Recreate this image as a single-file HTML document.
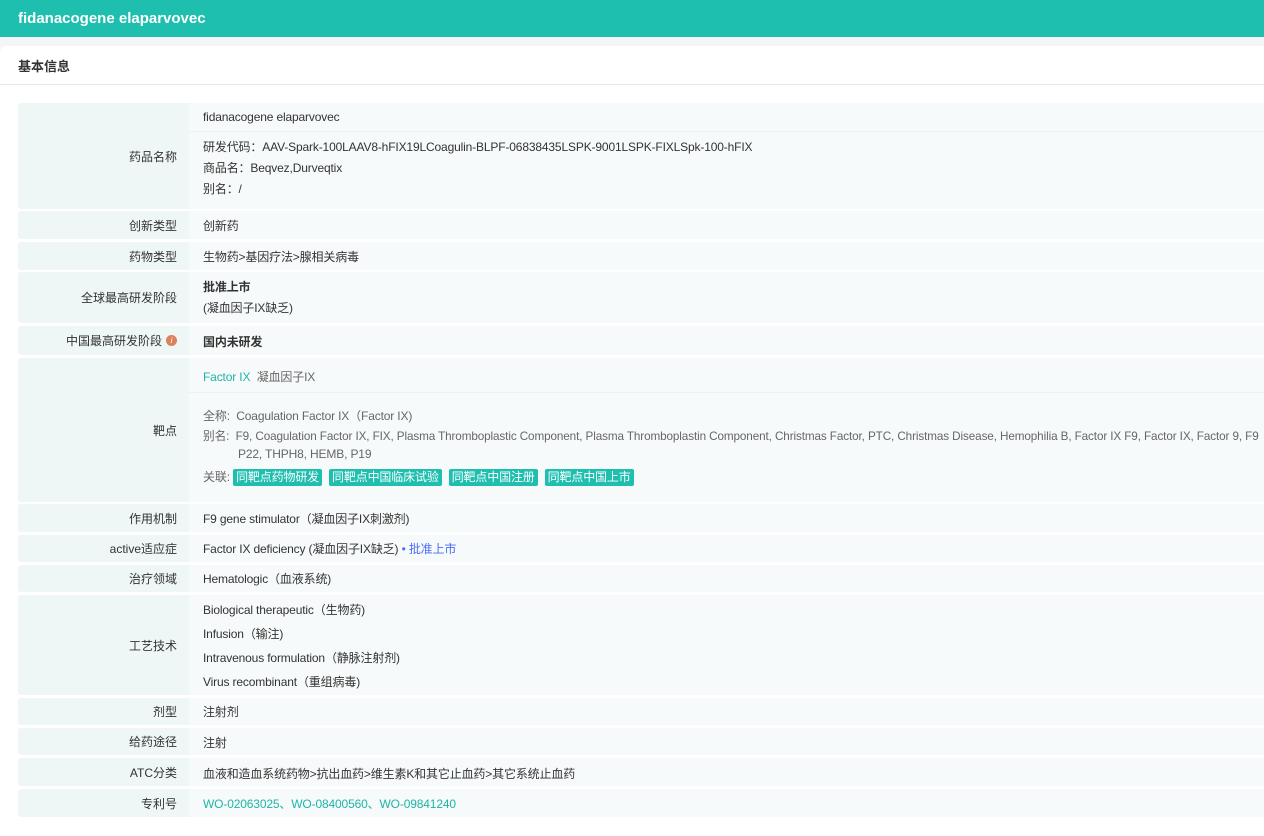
<!DOCTYPE html>
<html><head><meta charset="utf-8"><style>
*{margin:0;padding:0;box-sizing:border-box}
body{width:1264px;height:819px;overflow:hidden;background:#f4f5f7;font-family:"Liberation Sans","Noto Sans CJK SC",sans-serif;font-size:12px;color:#333}
.hd{position:absolute;left:0;top:0;width:1264px;height:37px;background:#1fbfb0;color:#fff;font-weight:bold;font-size:15px;line-height:37px;padding-left:18px}
.card{position:absolute;left:0;top:46px;width:1264px;height:790px;background:#fff;border-radius:6px 0 0 0}
.ttl{position:absolute;left:18px;top:56px;font-weight:bold;font-size:13px}
.line{position:absolute;left:0;top:84px;width:1264px;height:1px;background:#e8e8e8}
.l{position:absolute;left:18px;width:171px;background:#eef6f6;border-radius:3px 0 0 3px;text-align:right;padding-right:12px;display:flex;align-items:center;justify-content:flex-end}
.v{position:absolute;left:189px;width:1075px;background:#f7fafa;padding-left:14px}
.t{position:absolute;left:203px;white-space:nowrap;letter-spacing:-0.15px}
.tag{display:inline-block;background:#1fbfb0;color:#fff;padding:0 3px;border-radius:2px;line-height:17px;margin-right:7px}
.g{color:#666}
.teal{color:#1fb5a6}
</style></head><body>
<div class="hd">fidanacogene elaparvovec</div>
<div class="card"></div>
<div class="ttl">基本信息</div>
<div class="line"></div>

<div class="l" style="top:103px;height:106px">药品名称</div>
<div class="v" style="top:103px;height:106px"></div>
<div style="position:absolute;left:189px;top:131px;width:1075px;height:1px;background:#eef2f2"></div>
<div class="t" style="top:110px">fidanacogene elaparvovec</div>
<div class="t" style="top:138px">研发代码：AAV-Spark-100LAAV8-hFIX19LCoagulin-BLPF-06838435LSPK-9001LSPK-FIXLSpk-100-hFIX</div>
<div class="t" style="top:159px">商品名：Beqvez,Durveqtix</div>
<div class="t" style="top:180px">别名：/</div>

<div class="l" style="top:211px;height:28px">创新类型</div><div class="v" style="top:211px;height:28px"></div><div class="t" style="top:217px">创新药</div>
<div class="l" style="top:242px;height:28px">药物类型</div><div class="v" style="top:242px;height:28px"></div><div class="t" style="top:248px">生物药&gt;基因疗法&gt;腺相关病毒</div>
<div class="l" style="top:272px;height:51px">全球最高研发阶段</div><div class="v" style="top:272px;height:51px"></div>
<div class="t" style="top:278px;font-weight:bold">批准上市</div><div class="t" style="top:299px">(凝血因子IX缺乏)</div>
<div class="l" style="top:326px;height:29px">中国最高研发阶段 <span style="display:inline-block;width:11px;height:11px;border-radius:50%;background:#d9825b;color:#fff;font-size:8px;line-height:11px;text-align:center;margin-left:4px;font-style:italic">i</span></div><div class="v" style="top:326px;height:29px"></div><div class="t" style="top:333px;font-weight:bold">国内未研发</div>

<div class="l" style="top:358px;height:144px">靶点</div><div class="v" style="top:358px;height:144px"></div>
<div style="position:absolute;left:189px;top:392px;width:1075px;height:1px;background:#eef2f2"></div>
<div class="t" style="top:368px"><span class="teal">Factor IX</span>&nbsp;&nbsp;<span class="g">凝血因子IX</span></div>
<div class="t g" style="top:407px">全称:&nbsp; Coagulation Factor IX（Factor IX)</div>
<div class="t g" style="top:427px;font-size:11.7px;letter-spacing:-0.1px">别名:&nbsp; F9, Coagulation Factor IX, FIX, Plasma Thromboplastic Component, Plasma Thromboplastin Component, Christmas Factor, PTC, Christmas Disease, Hemophilia B, Factor IX F9, Factor IX, Factor 9, F9</div>
<div class="t g" style="top:447px;left:238px">P22, THPH8, HEMB, P19</div>
<div class="t g" style="top:468px">关联:&nbsp;<span class="tag">同靶点药物研发</span><span class="tag">同靶点中国临床试验</span><span class="tag">同靶点中国注册</span><span class="tag">同靶点中国上市</span></div>

<div class="l" style="top:504px;height:28px">作用机制</div><div class="v" style="top:504px;height:28px"></div><div class="t" style="top:510px">F9 gene stimulator（凝血因子IX刺激剂)</div>
<div class="l" style="top:535px;height:27px">active适应症</div><div class="v" style="top:535px;height:27px"></div><div class="t" style="top:540px">Factor IX deficiency (凝血因子IX缺乏) <span style="color:#4a6cf7">• 批准上市</span></div>
<div class="l" style="top:565px;height:27px">治疗领域</div><div class="v" style="top:565px;height:27px"></div><div class="t" style="top:570px">Hematologic（血液系统)</div>
<div class="l" style="top:595px;height:100px">工艺技术</div><div class="v" style="top:595px;height:100px"></div>
<div class="t" style="top:601px">Biological therapeutic（生物药)</div>
<div class="t" style="top:625px">Infusion（输注)</div>
<div class="t" style="top:649px">Intravenous formulation（静脉注射剂)</div>
<div class="t" style="top:673px">Virus recombinant（重组病毒)</div>
<div class="l" style="top:698px;height:27px">剂型</div><div class="v" style="top:698px;height:27px"></div><div class="t" style="top:703px">注射剂</div>
<div class="l" style="top:728px;height:27px">给药途径</div><div class="v" style="top:728px;height:27px"></div><div class="t" style="top:734px">注射</div>
<div class="l" style="top:758px;height:28px">ATC分类</div><div class="v" style="top:758px;height:28px"></div><div class="t" style="top:765px">血液和造血系统药物&gt;抗出血药&gt;维生素K和其它止血药&gt;其它系统止血药</div>
<div class="l" style="top:789px;height:28px">专利号</div><div class="v" style="top:789px;height:28px"></div><div class="t teal" style="top:795px">WO-02063025、WO-08400560、WO-09841240</div>
</body></html>
